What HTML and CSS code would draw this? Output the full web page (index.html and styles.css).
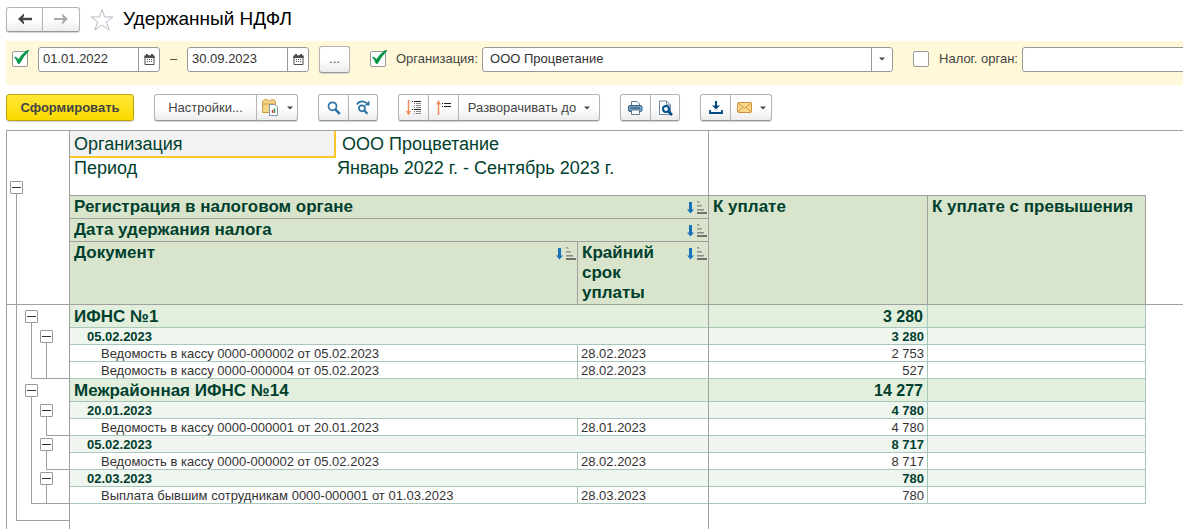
FILE: index.html
```html
<!DOCTYPE html>
<html lang="ru">
<head>
<meta charset="utf-8">
<title>Удержанный НДФЛ</title>
<link rel="stylesheet" href="styles.css">
</head>
<body>
<svg class="defs" aria-hidden="true">
  <symbol id="tick" viewBox="0 0 17 16"><path d="M1.500 7Q3.500 6.500 5.500 9.500Q9 4 14 0.500H16Q10.500 6 6.500 13.500H5Q3.500 9.500 1.500 7Z" fill="#009646" stroke="#009646" stroke-width="0.600"/></symbol>
  <symbol id="calendar" viewBox="0 0 11 11"><path d="M1 2V10.500H10V2Z" fill="#fff" stroke="#4d4d4d"/><path d="M0.500 1.500H10.500V4H0.500ZM2 0H4V2H2ZM7 0H9V2H7Z" fill="#4d4d4d"/><path d="M3 5.500H8.500M3 7.500H8.500" stroke="#4d4d4d" stroke-dasharray="1 1"/></symbol>
  <symbol id="sort" viewBox="0 0 20 14"><path d="M3.500 1V9" stroke="#1873b9" stroke-width="3"/><path d="M0 8.500H7L3.500 12.500Z" fill="#1873b9"/><path d="M10 0.500H12M10 4.500H15M10 8.500H17" stroke="#999"/><path d="M10 1.500H13M10 5.500H15" stroke="#b0b8a8"/><path d="M10 9H17" stroke="#7c8277"/><path d="M10 12H20" stroke="#4d4d4d" stroke-width="1.500"/></symbol>
  <symbol id="caret" viewBox="0 0 6 4"><path d="M0 0.500H6L3 3.500Z" fill="#444"/></symbol>
</svg>

<header class="titlebar">
  <div class="group nav">
    <button class="btn" aria-label="Назад"><svg width="14" height="12" viewBox="0 0 14 12"><path d="M14 6H4" stroke="#444" stroke-width="2.500"/><path d="M0 6L6 0.500V3L4 6L6 9V11.500Z" fill="#444"/></svg></button>
    <button class="btn" aria-label="Вперёд"><svg width="14" height="12" viewBox="0 0 14 12"><path d="M0 6H10" stroke="#aaa" stroke-width="2"/><path d="M14 6L8 0.500V3L10 6L8 9V11.500Z" fill="#aaa"/></svg></button>
  </div>
  <svg class="star" width="24" height="23" viewBox="0 0 24 23"><path d="M12 1.500L14.600 9H23L16.300 13.800L19.200 22L12 17L4.800 22L7.700 13.800L1 9H9.400Z" fill="#fff" stroke="#b4bcc4"/></svg>
  <h1 class="title">Удержанный НДФЛ</h1>
</header>

<form class="filters">
  <span class="check"><input type="checkbox" checked aria-label="Период"><svg class="tick"><use href="#tick"/></svg></span>
  <span class="field date first"><input type="text" value="01.01.2022" aria-label="Начало периода"><button type="button" aria-label="Выбрать дату начала"><svg width="11" height="11"><use href="#calendar"/></svg></button></span>
  <span class="dash">–</span>
  <span class="field date"><input type="text" value="30.09.2023" aria-label="Конец периода"><button type="button" aria-label="Выбрать дату окончания"><svg width="11" height="11"><use href="#calendar"/></svg></button></span>
  <button type="button" class="btn more">...</button>
  <span class="check org-check"><input type="checkbox" id="org-on" checked><svg class="tick"><use href="#tick"/></svg></span>
  <label class="label" for="org-on">Организация:</label>
  <span class="field org"><input type="text" value="ООО Процветание" aria-label="Организация"><button type="button" aria-label="Выбрать организацию"><svg width="6" height="4"><use href="#caret"/></svg></button></span>
  <span class="check tax-check"><input type="checkbox" id="tax-on"></span>
  <label class="label" for="tax-on">Налог. орган:</label>
  <span class="field tax"><input type="text" aria-label="Налог. орган"></span>
</form>

<div class="toolbar">
  <button class="btn primary">Сформировать</button>
  <div class="group">
    <button class="btn settings">Настройки...</button>
    <button class="btn wide" aria-label="Варианты отчёта">
      <svg width="17" height="17" viewBox="0 0 17 17"><path d="M0.500 13.500V3L2 0.800H6L7.500 2.500L9 0.800H12L13.500 3V13.500Z" fill="#f4d58c" stroke="#cf9c3c"/><path d="M1 5H13" stroke="#cf9c3c"/><path d="M7.500 5.500H13L15.500 8V16.500H7.500Z" fill="#fff" stroke="#8296a8"/><path d="M10.500 14V11" stroke="#e03030" stroke-width="1.500"/><path d="M12.500 14V9.500" stroke="#2c9c50" stroke-width="1.500"/></svg>
      <svg class="caret"><use href="#caret"/></svg>
    </button>
  </div>
  <div class="group">
    <button class="btn icon" aria-label="Найти"><svg width="14" height="14" viewBox="0 0 14 14"><circle cx="5.500" cy="5.300" r="4" fill="#fff" stroke="#2c74a4" stroke-width="1.700"/><path d="M8.300 8.300L12.800 12.800" stroke="#2c74a4" stroke-width="2.600"/></svg></button>
    <button class="btn icon" aria-label="Найти далее"><svg width="15" height="15" viewBox="0 0 15 15"><path d="M1 4.500Q3 1 7 1.500Q9.500 2 11 3.500" fill="none" stroke="#2c74a4" stroke-width="1.700"/><path d="M13.500 0.500V5.500H8.500Z" fill="#2c74a4"/><circle cx="6" cy="8.300" r="3" fill="#fff" stroke="#2c74a4" stroke-width="1.700"/><path d="M8 10.300L11.500 13.800" stroke="#2c74a4" stroke-width="2.200"/></svg></button>
  </div>
  <div class="group">
    <button class="btn icon" aria-label="Развернуть все"><svg width="16" height="16" viewBox="0 0 16 16"><path d="M2.500 0V14" stroke="#f58a58" stroke-width="1.500"/><path d="M0 11H5L2.500 15.500Z" fill="#f58a58"/><path d="M6 1.500H7M8 1.500H15M6 9.500H7M8 9.500H15" stroke="#222"/><path d="M8 3.500H9M10 3.500H15M8 5.500H9M10 5.500H15M8 7.500H9M10 7.500H15M8 11.500H9M10 11.500H15M8 13.500H9M10 13.500H15" stroke="#888"/></svg></button>
    <button class="btn icon" aria-label="Свернуть все"><svg width="16" height="16" viewBox="0 0 16 16"><path d="M2.500 15V2" stroke="#f58a58" stroke-width="1.500"/><path d="M0 4.500H5L2.500 0Z" fill="#f58a58"/><path d="M6 3.500H7M8 3.500H15M6 6.500H7M8 6.500H15" stroke="#222"/></svg></button>
    <button class="btn expand">Разворачивать до <svg class="caret"><use href="#caret"/></svg></button>
  </div>
  <div class="group">
    <button class="btn icon" aria-label="Печать"><svg width="15" height="14" viewBox="0 0 15 14"><path d="M3.500 5V0.500H9L11.500 3V5" fill="#fff" stroke="#5b7a94"/><rect x="0.500" y="4.500" width="13.500" height="6" rx="1.500" fill="#7ba3c4" stroke="#2a5d88"/><path d="M2.500 7H12" stroke="#20496b"/><path d="M3.500 9H11.500V13.500H3.500Z" fill="#fff" stroke="#5b7a94"/></svg></button>
    <button class="btn icon" aria-label="Предварительный просмотр"><svg width="15" height="16" viewBox="0 0 15 16"><path d="M1.500 1H8.500L12.500 5V14.500H1.500Z" fill="#fff" stroke="#74899c"/><path d="M8.500 1V5H12.500" fill="none" stroke="#74899c"/><circle cx="8" cy="9" r="3" fill="#fff" stroke="#00508c" stroke-width="2"/><path d="M10 11L14 15" stroke="#00508c" stroke-width="2.500"/></svg></button>
  </div>
  <div class="group">
    <button class="btn icon" aria-label="Сохранить"><svg width="14" height="13" viewBox="0 0 14 13"><path d="M7 0V6" stroke="#004a7c" stroke-width="2"/><path d="M3 4.500H11L7 8.500Z" fill="#004a7c"/><path d="M1 9V12H13V9" fill="none" stroke="#004a7c" stroke-width="1.800"/></svg></button>
    <button class="btn wide" aria-label="Отправить"><svg width="15" height="11" viewBox="0 0 15 11"><rect x="0.500" y="0.500" width="14" height="10" rx="1" fill="#f9d88c" stroke="#cf9038"/><path d="M1 1L7.500 6.500L14 1M1 10L5.500 5.500M14 10L9.500 5.500" fill="none" stroke="#cf9038"/></svg><svg class="caret"><use href="#caret"/></svg></button>
  </div>
</div>

<table class="report">
  <colgroup><col class="c-tree"><col class="c-tree"><col class="c-tree-last"><col class="c-name"><col class="c-value"><col class="c-due"><col class="c-pay"><col class="c-over"><col></colgroup>
  <thead>
    <tr class="r-org"><td></td><td></td><td class="edge"></td><td class="param selected">Организация</td><td class="param org-value edge" colspan="2">ООО Процветание</td><td colspan="3"></td></tr>
    <tr class="r-period"><td></td><td></td><td class="edge"></td><td class="param">Период</td><td class="param value edge" colspan="2">Январь 2022 г. - Сентябрь 2023 г.</td><td colspan="3"></td></tr>
    <tr class="r-gap"><td class="start"><button class="toggle" aria-label="Свернуть отчёт"></button></td><td></td><td class="edge"></td><td class="under"></td><td class="under edge" colspan="2"></td><td class="under"></td><td class="under"></td><td></td></tr>
    <tr class="r-head"><td class="rail"></td><td></td><td class="edge"></td><th colspan="3"><div class="head">Регистрация в налоговом органе<svg class="sort"><use href="#sort"/></svg></div></th><th rowspan="3"><div class="head">К уплате</div></th><th rowspan="3"><div class="head">К уплате с превышения</div></th><td></td></tr>
    <tr class="r-head"><td class="rail"></td><td></td><td class="edge"></td><th colspan="3"><div class="head">Дата удержания налога<svg class="sort"><use href="#sort"/></svg></div></th><td></td></tr>
    <tr class="r-doc"><td class="rail under"></td><td class="under"></td><td class="under edge"></td><th colspan="2"><div class="head">Документ<svg class="sort"><use href="#sort"/></svg></div></th><th><div class="head"><span class="wrap">Крайний срок уплаты</span><svg class="sort"><use href="#sort"/></svg></div></th><td class="under"></td></tr>
  </thead>
  <tbody>
    <tr class="office"><td class="rail"></td><td class="start"><button class="toggle" aria-label="Свернуть ИФНС №1"></button></td><td class="edge"></td><td class="cell edge" colspan="3">ИФНС №1</td><td class="cell num">3 280</td><td class="cell"></td><td></td></tr>
    <tr class="day"><td class="rail"></td><td class="rail"></td><td class="start edge"><button class="toggle" aria-label="Свернуть 05.02.2023"></button></td><td class="cell edge" colspan="3">05.02.2023</td><td class="cell num">3 280</td><td class="cell"></td><td></td></tr>
    <tr class="doc"><td class="rail"></td><td class="rail"></td><td class="rail edge"></td><td class="cell" colspan="2">Ведомость в кассу 0000-000002 от 05.02.2023</td><td class="cell due edge">28.02.2023</td><td class="cell num">2 753</td><td class="cell"></td><td></td></tr>
    <tr class="doc"><td class="rail"></td><td class="rail end"></td><td class="rail end edge through"></td><td class="cell" colspan="2">Ведомость в кассу 0000-000004 от 05.02.2023</td><td class="cell due edge">28.02.2023</td><td class="cell num">527</td><td class="cell"></td><td></td></tr>
    <tr class="office"><td class="rail"></td><td class="start"><button class="toggle" aria-label="Свернуть Межрайонная ИФНС №14"></button></td><td class="edge"></td><td class="cell edge" colspan="3">Межрайонная ИФНС №14</td><td class="cell num">14 277</td><td class="cell"></td><td></td></tr>
    <tr class="day"><td class="rail"></td><td class="rail"></td><td class="start edge"><button class="toggle" aria-label="Свернуть 20.01.2023"></button></td><td class="cell edge" colspan="3">20.01.2023</td><td class="cell num">4 780</td><td class="cell"></td><td></td></tr>
    <tr class="doc"><td class="rail"></td><td class="rail"></td><td class="rail end edge"></td><td class="cell" colspan="2">Ведомость в кассу 0000-000001 от 20.01.2023</td><td class="cell due edge">28.01.2023</td><td class="cell num">4 780</td><td class="cell"></td><td></td></tr>
    <tr class="day"><td class="rail"></td><td class="rail"></td><td class="start edge"><button class="toggle" aria-label="Свернуть 05.02.2023"></button></td><td class="cell edge" colspan="3">05.02.2023</td><td class="cell num">8 717</td><td class="cell"></td><td></td></tr>
    <tr class="doc"><td class="rail"></td><td class="rail"></td><td class="rail end edge"></td><td class="cell" colspan="2">Ведомость в кассу 0000-000002 от 05.02.2023</td><td class="cell due edge">28.02.2023</td><td class="cell num">8 717</td><td class="cell"></td><td></td></tr>
    <tr class="day"><td class="rail"></td><td class="rail"></td><td class="start edge"><button class="toggle" aria-label="Свернуть 02.03.2023"></button></td><td class="cell edge" colspan="3">02.03.2023</td><td class="cell num">780</td><td class="cell"></td><td></td></tr>
    <tr class="doc"><td class="rail"></td><td class="rail end"></td><td class="rail end edge through"></td><td class="cell" colspan="2">Выплата бывшим сотрудникам 0000-000001 от 01.03.2023</td><td class="cell due edge">28.03.2023</td><td class="cell num">780</td><td class="cell"></td><td></td></tr>
    <tr class="doc"><td class="rail end"></td><td class="under"></td><td class="under edge"></td><td class="edge" colspan="3"></td><td colspan="3"></td></tr>
    <tr class="tail"><td></td><td></td><td class="edge"></td><td class="edge" colspan="3"></td><td colspan="3"></td></tr>
  </tbody>
</table>
</body>
</html>
```

FILE: styles.css
```css
* { box-sizing: border-box; }

:root {
  --line: #a0a0a0;
  --grid: #a9c6ba;
  --green: #003f2d;
}

body {
  margin: 0;
  padding: 6px 0 0 6px;
  overflow-x: hidden;
  background: #fff;
  color: #444;
  font: 13px/16px "Liberation Sans", Arial, sans-serif;
}

.defs { position: absolute; width: 0; height: 0; }

button, input { font: inherit; color: inherit; }

/* Title */
.titlebar { display: flex; align-items: center; height: 26px; }
.nav .btn { width: 38px; height: 25px; }
.nav .btn:first-child { width: 37px; }
.star { margin: 0 9px 0 10px; }
.title { margin: 0; color: #000; font-size: 19px; font-weight: 400; line-height: 24px; }

/* Buttons */
.group { display: flex; }
.btn {
  display: flex;
  align-items: center;
  justify-content: center;
  height: 27px;
  padding: 0;
  border: 1px solid #b4b4b4;
  border-bottom-color: #969696;
  border-radius: 3px;
  background: linear-gradient(#fff 50%, #ececec);
  box-shadow: 0 1px 1px #d4d4d4;
}
.group .btn + .btn { margin-left: -1px; border-top-left-radius: 0; border-bottom-left-radius: 0; }
.group .btn:not(:last-child) { border-top-right-radius: 0; border-bottom-right-radius: 0; }
.caret { width: 6px; height: 4px; }

/* Filters */
.filters {
  display: flex;
  align-items: center;
  height: 44px;
  margin-top: 9px;
  padding: 0 0 8px 6px;
  background: #fff9d9;
}
.check { position: relative; flex: none; width: 16px; height: 16px; }
.check input {
  display: block;
  appearance: none;
  width: 16px;
  height: 16px;
  margin: 0;
  border: 1px solid #999;
  border-radius: 2px;
  background: #fff;
}
.tick { position: absolute; left: 1px; top: -1px; width: 17px; height: 16px; pointer-events: none; }
.field {
  display: flex;
  flex: none;
  height: 25px;
  border: 1px solid #999;
  border-radius: 3px;
  background: #fff;
  overflow: hidden;
}
.field input { flex: 1; min-width: 0; padding: 0 0 0 4px; border: 0; background: none; color: #333; outline: none; }
.field button {
  display: flex;
  align-items: center;
  justify-content: center;
  width: 21px;
  padding: 0;
  border: 0;
  border-left: 1px solid #999;
  background: none;
}
.date { width: 122px; }
.first { margin-left: 10px; }
.dash { width: 27px; text-align: center; }
.more { width: 31px; margin-left: 10px; }
.org-check { margin-left: 20px; }
.label { margin: 0 4px 0 10px; white-space: nowrap; }
.org { flex: 0 1 411px; }
.org input { padding-left: 7px; }
.tax-check { margin-left: 20px; }
.tax { flex: 1 0 160px; margin-right: -4px; }

/* Toolbar */
.toolbar { display: flex; gap: 20px; margin: 9px 0; }
.primary {
  width: 128px;
  border-color: #bfa010;
  background: linear-gradient(#ffe838, #fbd900);
  font-weight: 700;
}
.settings { width: 103px; }
.icon { width: 31px; }
.icon:last-child { width: 30px; }
.wide { width: 42px; gap: 8px; }
.expand { width: 142px; gap: 8px; }

/* Report */
.report {
  width: 100%;
  table-layout: fixed;
  border-collapse: separate;
  border-spacing: 0;
  border-top: 1px solid var(--line);
  border-left: 1px solid var(--line);
}
.c-tree { width: 15px; }
.c-tree-last { width: 33px; }
.c-name { width: 266px; }
.c-value { width: 242px; }
.c-due { width: 131px; }
.c-pay { width: 219px; }
.c-over { width: 218px; }

td, th { padding: 0; white-space: nowrap; }

.r-org { height: 27px; }
.r-period { height: 21px; }
.r-gap { height: 17px; }
.r-head { height: 23px; }
.r-doc { height: 63px; }
.office { height: 23px; }
.day, .doc { height: 17px; }
.tail { height: 9px; }

.edge { border-right: 1px solid var(--line); }
.under { border-bottom: 1px solid var(--line); }

.param { padding-left: 4px; color: var(--green); font-size: 18px; line-height: 20px; }
.r-org .param { padding-bottom: 2px; }
.r-period .param { padding-bottom: 1px; }
.selected { border: solid #fac828; border-width: 0 2px 2px 0; background: #f2f2f2; }
.r-org .selected { padding-bottom: 0; }
.org-value { padding-left: 6px; }
.value { padding-left: 1px; }

th {
  border: solid var(--line);
  border-width: 0 1px 1px 0;
  background: #d8e5cc;
  color: var(--green);
  font-size: 17px;
  line-height: 20px;
  text-align: left;
  vertical-align: top;
}
.head { display: flex; justify-content: space-between; padding: 1px 0 0 4px; }
.wrap { width: 80px; white-space: normal; }
.sort { flex: none; width: 20px; height: 14px; margin: 4px 1px 0 0; }

.cell {
  padding-top: 2px;
  border-right: 1px solid var(--grid);
  border-bottom: 1px solid var(--grid);
  color: #333;
  line-height: 14px;
}
.cell.edge { border-right-color: var(--line); }
.office .cell { padding-left: 4px; background: #e3efdd; color: var(--green); font-size: 17px; font-weight: 700; }
.day .cell { padding-left: 17px; background: #eff5ef; color: var(--green); font-weight: 700; }
.doc .cell { padding-left: 31px; }
.doc .due { padding-left: 3px; }
.report .num { padding-right: 3px; text-align: right; }
.report .office .num { padding-right: 4px; font-size: 16px; }

/* Outline rails beside the rows */
.rail, .start {
  background-image: linear-gradient(var(--line), var(--line)), linear-gradient(var(--line), var(--line));
  background-repeat: no-repeat;
  background-position: 9px 100%, 9px 100%;
  background-size: 1px 100%, 0 0;
}
.start { background-size: 1px 50%, 0 0; }
.end { background-size: 1px 100%, 100% 1px; }
.through { background-position: 9px 100%, 0 100%; }

.toggle {
  display: block;
  position: relative;
  width: 13px;
  height: 13px;
  margin-left: 3px;
  padding: 0;
  border: 1px solid #999;
  border-radius: 1px;
  background: linear-gradient(#333, #333) center / 9px 1px no-repeat #fff;
}
```
